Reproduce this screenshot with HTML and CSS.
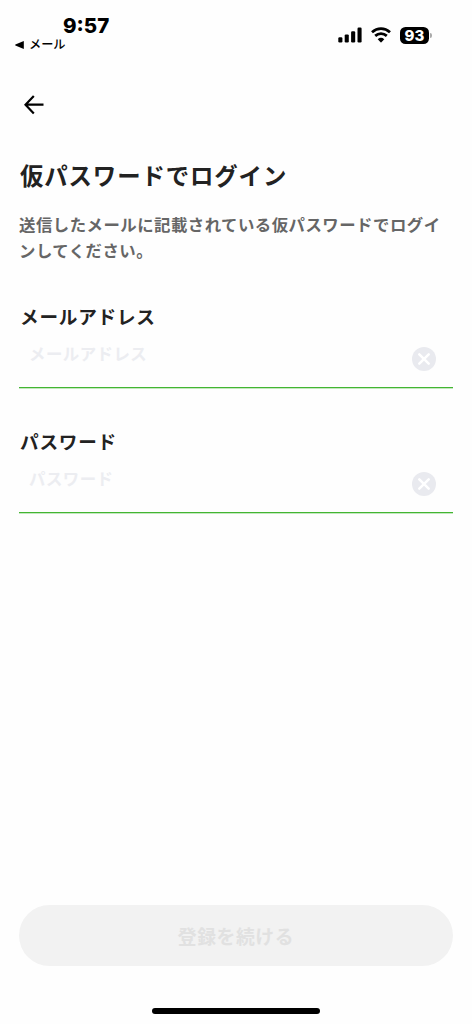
FILE: index.html
```html
<!DOCTYPE html>
<html lang="ja">
<head>
<meta charset="utf-8">
<title>仮パスワードでログイン</title>
<link rel="stylesheet" href="styles.css">
</head>
<body>
<div class="screen">
  <header class="status">
    <div class="status-left">
      <div class="time">9:57</div>
      <div class="back-app">
        <svg width="9" height="8" viewBox="0 0 9 8"><path d="M8.8 0v8L.4 4.5Q0 4 .4 3.5z"/></svg>
        <span>メール</span>
      </div>
    </div>
    <div class="status-right">
      <svg class="signal" width="24" height="16" viewBox="0 0 24 16"><rect x="0.3" y="10.2" width="4.1" height="5.3" rx="1.2"/><rect x="6.7" y="7.4" width="4.1" height="8.1" rx="1.2"/><rect x="13.1" y="4.2" width="4.1" height="11.3" rx="1.2"/><rect x="19.5" y="0.6" width="4.1" height="14.9" rx="1.2"/></svg>
      <svg class="wifi" width="20" height="16" viewBox="0 0 20 16"><g fill="none" stroke="#000" stroke-width="2.8"><path d="M1 5.2Q5 1.7 10 1.7T19 5.2"/><path d="M4.2 8.9Q6.8 6.7 10 6.7T15.8 8.9"/></g><path d="M6.7 12.2Q10 9.5 13.3 12.2L10.4 15.2Q10 15.6 9.6 15.2z"/></svg>
      <div class="battery"><span class="level">93</span><span class="tip"></span></div>
    </div>
  </header>
  <nav class="nav">
    <svg width="20" height="20" viewBox="0 0 20 20" fill="none" stroke="#000" stroke-width="2.2"><path d="M19.5 9.7H2M9.8 1 1.5 9.7 9.8 18.4"/></svg>
  </nav>
  <main class="content">
    <h1 class="title">仮パスワードでログイン</h1>
    <p class="lead">送信したメールに記載されている仮パスワードでログインしてください。</p>
    <div class="field">
      <div class="label">メールアドレス</div>
      <div class="input"><span class="placeholder">メールアドレス</span>
        <svg class="clear" width="24" height="24" viewBox="0 0 24 24"><circle cx="12" cy="12" r="12"/><path d="m7.3 7.3 9.4 9.4m0-9.4-9.4 9.4"/></svg>
      </div>
    </div>
    <div class="field">
      <div class="label">パスワード</div>
      <div class="input"><span class="placeholder">パスワード</span>
        <svg class="clear" width="24" height="24" viewBox="0 0 24 24"><circle cx="12" cy="12" r="12"/><path d="m7.3 7.3 9.4 9.4m0-9.4-9.4 9.4"/></svg>
      </div>
    </div>
  </main>
  <footer class="footer">
    <div class="submit">登録を続ける</div>
    <div class="home"></div>
  </footer>
</div>
</body>
</html>
```
FILE: styles.css
```css
* { box-sizing: border-box; }
body {
  margin: 0;
  background: #fefefe;
  color: #222;
  font-family: "Noto Sans CJK JP", sans-serif;
}
svg { display: block; }
.screen { display: flex; flex-direction: column; width: 472px; height: 1024px; overflow: hidden; }
.status { display: flex; justify-content: space-between; height: 80px; color: #000; }
.status-left { padding: 14px 0 0 15px; }
.time {
  padding-left: 48px;
  font: 800 20.5px/24px Inter, sans-serif;
}
.back-app { display: flex; align-items: center; gap: 5px; height: 13px; font-size: 12.2px; line-height: 13px; font-weight: 500; }
.status-right { display: flex; align-items: flex-start; padding: 27px 40px 0 0; }
.wifi { margin-left: 9px; }
.battery { display: flex; align-items: center; margin-left: 9px; }
.level {
  width: 29px;
  height: 17px;
  border-radius: 5.5px;
  background: #000;
  color: #fff;
  font: 800 15px/17px Inter, sans-serif;
  text-align: center;
}
.tip { width: 2px; height: 5px; margin-left: 1px; border-radius: 0 2px 2px 0; background: #aaa; }
.nav { height: 48px; padding: 15px 0 0 24px; }
.content { flex: 1; padding: 29px 19px 0; }
.title { margin: 0; padding-left: 1px; font-size: 23.4px; line-height: 36px; font-weight: 700; letter-spacing: 0.9px; }
.lead { margin: 18px 0 0; color: #666; font-size: 16.4px; line-height: 26px; font-weight: 700; letter-spacing: 0.49px; }
.field { height: 125px; }
.lead + .field { margin-top: 39px; }
.label { padding-left: 1px; font-size: 18.6px; line-height: 28px; font-weight: 700; letter-spacing: 0.8px; }
.input { display: flex; justify-content: space-between; height: 58px; padding: 0 17px 0 10px; border-bottom: 1px solid #43b532; box-shadow: 0 1px #c3e8be; }
.placeholder { margin-top: 10px; color: #ecedf1; font-size: 16.4px; line-height: 26px; font-weight: 700; letter-spacing: 0.49px; }
.clear { margin-top: 17px; fill: #e9eaef; stroke: #fff; stroke-width: 2.5; stroke-linecap: round; }
.clear circle { stroke: none; }
.footer { height: 119px; padding: 0 19px; }
.submit { height: 61px; border-radius: 31px; background: #f2f2f2; color: #e1e1e1; font-size: 18.8px; line-height: 61px; font-weight: 700; letter-spacing: 0.6px; text-align: center; }
.home { width: 168px; height: 6px; margin: 42px auto 0; border-radius: 3px; background: #000; }
```
